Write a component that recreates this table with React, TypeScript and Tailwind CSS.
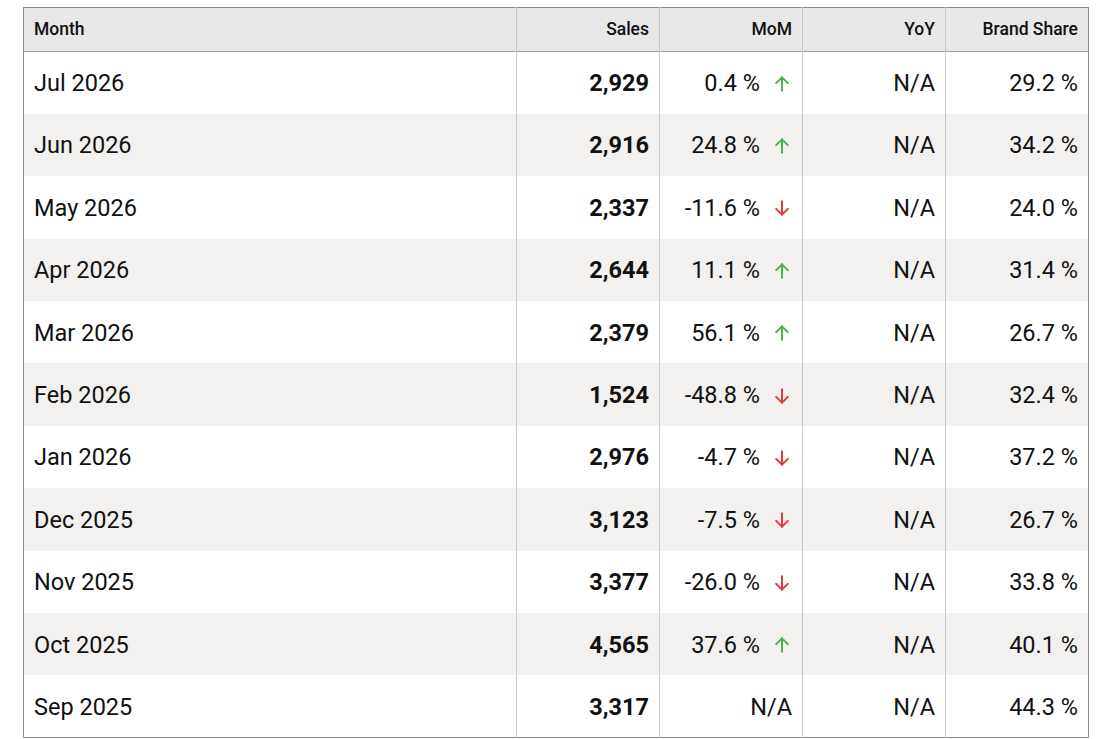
import React from "react"

interface Row {
  month: string
  sales: string
  mom: string
  dir?: "up" | "down"
  yoy: string
  share: string
}

const rows: Row[] = [
  { month: "Jul 2026", sales: "2,929", mom: "0.4 %", dir: "up", yoy: "N/A", share: "29.2 %" },
  { month: "Jun 2026", sales: "2,916", mom: "24.8 %", dir: "up", yoy: "N/A", share: "34.2 %" },
  { month: "May 2026", sales: "2,337", mom: "-11.6 %", dir: "down", yoy: "N/A", share: "24.0 %" },
  { month: "Apr 2026", sales: "2,644", mom: "11.1 %", dir: "up", yoy: "N/A", share: "31.4 %" },
  { month: "Mar 2026", sales: "2,379", mom: "56.1 %", dir: "up", yoy: "N/A", share: "26.7 %" },
  { month: "Feb 2026", sales: "1,524", mom: "-48.8 %", dir: "down", yoy: "N/A", share: "32.4 %" },
  { month: "Jan 2026", sales: "2,976", mom: "-4.7 %", dir: "down", yoy: "N/A", share: "37.2 %" },
  { month: "Dec 2025", sales: "3,123", mom: "-7.5 %", dir: "down", yoy: "N/A", share: "26.7 %" },
  { month: "Nov 2025", sales: "3,377", mom: "-26.0 %", dir: "down", yoy: "N/A", share: "33.8 %" },
  { month: "Oct 2025", sales: "4,565", mom: "37.6 %", dir: "up", yoy: "N/A", share: "40.1 %" },
  { month: "Sep 2025", sales: "3,317", mom: "N/A", yoy: "N/A", share: "44.3 %" },
]

function Arrow({ dir }: { dir: "up" | "down" }) {
  const color = dir === "up" ? "text-[#4caf50]" : "text-[#e0393e]"
  return (
    <svg
      viewBox="0 0 24 24"
      className={`h-[20px] w-[20px] shrink-0 ${color}`}
      fill="none"
      stroke="currentColor"
      strokeWidth={2.4}
      strokeLinecap="round"
      strokeLinejoin="round"
    >
      {dir === "up" ? (
        <>
          <path d="M12 20V4" />
          <path d="M5 11l7-7 7 7" />
        </>
      ) : (
        <>
          <path d="M12 4v16" />
          <path d="M5 13l7 7 7-7" />
        </>
      )}
    </svg>
  )
}

export default function App() {
  return (
    <div className="min-h-screen bg-white pt-[7px] pl-[23px] font-['Roboto',sans-serif] text-[#111]">
      <table className="w-[1065px] table-fixed border-collapse border border-[#8a8a8a]">
        <colgroup>
          <col className="w-[493px]" />
          <col className="w-[143px]" />
          <col className="w-[143px]" />
          <col className="w-[143px]" />
          <col className="w-[143px]" />
        </colgroup>
        <thead>
          <tr className="h-[44px] bg-[#e8e8e8] border-b border-[#9a9a9a] text-[17.5px] font-medium">
            <th className="px-[10px] text-left font-medium">Month</th>
            <th className="px-[10px] text-right font-medium border-l border-[#c8c8c8]">Sales</th>
            <th className="px-[10px] text-right font-medium border-l border-[#c8c8c8]">MoM</th>
            <th className="px-[10px] text-right font-medium border-l border-[#c8c8c8]">YoY</th>
            <th className="px-[10px] text-right font-medium border-l border-[#c8c8c8]">Brand Share</th>
          </tr>
        </thead>
        <tbody className="text-[23.5px]">
          {rows.map((r, i) => (
            <tr key={r.month} className={`h-[62.4px] ${i % 2 === 1 ? "bg-[#f2f1ef]" : "bg-white"}`}>
              <td className="px-[10px] pt-[2px] text-left">{r.month}</td>
              <td className="px-[10px] pt-[2px] text-right font-bold border-l border-[#c8c8c8]">{r.sales}</td>
              <td className="px-[10px] pt-[2px] text-right border-l border-[#c8c8c8]">
                {r.dir ? (
                  <span className="inline-flex items-center justify-end gap-[12px]">
                    <span>{r.mom}</span>
                    <Arrow dir={r.dir} />
                  </span>
                ) : (
                  r.mom
                )}
              </td>
              <td className="px-[10px] pt-[2px] text-right border-l border-[#c8c8c8]">{r.yoy}</td>
              <td className="px-[10px] pt-[2px] text-right border-l border-[#c8c8c8]">{r.share}</td>
            </tr>
          ))}
        </tbody>
      </table>
    </div>
  )
}
